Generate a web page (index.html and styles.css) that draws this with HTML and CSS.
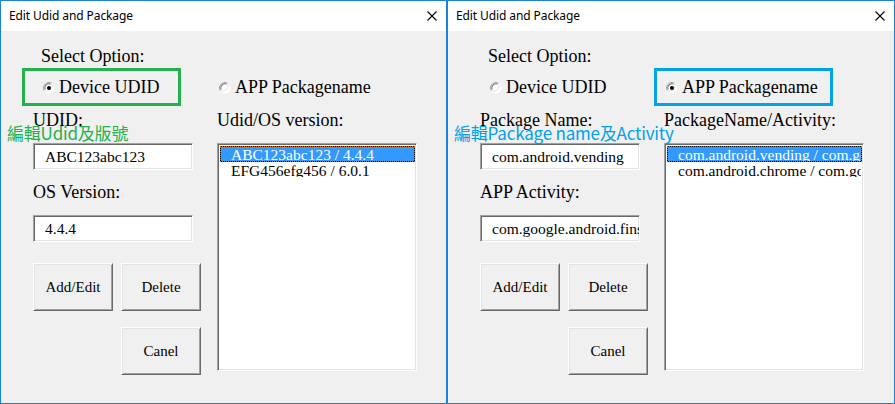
FILE: index.html
```html
<!DOCTYPE html>
<html>
<head>
<meta charset="utf-8">
<title>Edit Udid and Package</title>
<link rel="stylesheet" href="styles.css">
</head>
<body>
<div class="desktop">
  <section class="window win-left">
    <header class="titlebar">
      <span class="title">Edit Udid and Package</span>
      <svg class="close" width="10" height="10" viewBox="0 0 10 10"><path d="M0.5 0.5L9.5 9.5M9.5 0.5L0.5 9.5" stroke="#000" stroke-width="1.1" fill="none"/></svg>
    </header>
    <div class="body">
      <div class="caption">Select Option:</div>
      <div class="radios">
        <label class="radio r1">
          <svg class="radio-dot" width="12" height="12" viewBox="0 0 12 12"><circle cx="6" cy="6" r="5.5" fill="#fff"/><path d="M1.1 8.5A5.5 5.5 0 0 1 8.5 1.1" stroke="#a0a0a0" fill="none"/><path d="M8.5 1.1A5.5 5.5 0 0 1 1.1 8.5" stroke="#e3e3e3" fill="none"/><path d="M2 7.5A4.3 4.3 0 0 1 7.5 2" stroke="#696969" fill="none"/><circle cx="6" cy="6" r="2" fill="#000"/></svg>
          <span>Device UDID</span>
        </label>
        <label class="radio r2">
          <svg class="radio-dot" width="12" height="12" viewBox="0 0 12 12"><circle cx="6" cy="6" r="5.5" fill="#fff"/><path d="M1.1 8.5A5.5 5.5 0 0 1 8.5 1.1" stroke="#a0a0a0" fill="none"/><path d="M8.5 1.1A5.5 5.5 0 0 1 1.1 8.5" stroke="#e3e3e3" fill="none"/><path d="M2 7.5A4.3 4.3 0 0 1 7.5 2" stroke="#696969" fill="none"/></svg>
          <span>APP Packagename</span>
        </label>
      </div>
      <div class="main">
        <div class="col-left">
          <div class="label">UDID:</div>
          <div class="field">ABC123abc123</div>
          <div class="label gap">OS Version:</div>
          <div class="field">4.4.4</div>
          <div class="buttons">
            <button class="btn">Add/Edit</button>
            <button class="btn">Delete</button>
            <button class="btn btn-cancel">Canel</button>
          </div>
        </div>
        <div class="col-right">
          <div class="label">Udid/OS version:</div>
          <div class="list">
            <div class="item selected">ABC123abc123 / 4.4.4</div>
            <div class="item">EFG456efg456 / 6.0.1</div>
          </div>
        </div>
      </div>
    </div>
    <div class="mark mark-left green-box"></div>
    <div class="note green-text">編輯Udid及版號</div>
  </section>

  <section class="window win-right">
    <header class="titlebar">
      <span class="title">Edit Udid and Package</span>
      <svg class="close" width="10" height="10" viewBox="0 0 10 10"><path d="M0.5 0.5L9.5 9.5M9.5 0.5L0.5 9.5" stroke="#000" stroke-width="1.1" fill="none"/></svg>
    </header>
    <div class="body">
      <div class="caption">Select Option:</div>
      <div class="radios">
        <label class="radio r1">
          <svg class="radio-dot" width="12" height="12" viewBox="0 0 12 12"><circle cx="6" cy="6" r="5.5" fill="#fff"/><path d="M1.1 8.5A5.5 5.5 0 0 1 8.5 1.1" stroke="#a0a0a0" fill="none"/><path d="M8.5 1.1A5.5 5.5 0 0 1 1.1 8.5" stroke="#e3e3e3" fill="none"/><path d="M2 7.5A4.3 4.3 0 0 1 7.5 2" stroke="#696969" fill="none"/></svg>
          <span>Device UDID</span>
        </label>
        <label class="radio r2">
          <svg class="radio-dot" width="12" height="12" viewBox="0 0 12 12"><circle cx="6" cy="6" r="5.5" fill="#fff"/><path d="M1.1 8.5A5.5 5.5 0 0 1 8.5 1.1" stroke="#a0a0a0" fill="none"/><path d="M8.5 1.1A5.5 5.5 0 0 1 1.1 8.5" stroke="#e3e3e3" fill="none"/><path d="M2 7.5A4.3 4.3 0 0 1 7.5 2" stroke="#696969" fill="none"/><circle cx="6" cy="6" r="2" fill="#000"/></svg>
          <span>APP Packagename</span>
        </label>
      </div>
      <div class="main">
        <div class="col-left">
          <div class="label">Package Name:</div>
          <div class="field">com.android.vending</div>
          <div class="label gap">APP Activity:</div>
          <div class="field">com.google.android.finsky.activities.MainActivity</div>
          <div class="buttons">
            <button class="btn">Add/Edit</button>
            <button class="btn">Delete</button>
            <button class="btn btn-cancel">Canel</button>
          </div>
        </div>
        <div class="col-right">
          <div class="label">PackageName/Activity:</div>
          <div class="list">
            <div class="item selected">com.android.vending / com.google.android.finsky.activities.MainActivity</div>
            <div class="item">com.android.chrome / com.google.android.apps.chrome.Main</div>
          </div>
        </div>
      </div>
    </div>
    <div class="mark mark-right blue-box"></div>
    <div class="note blue-text">編輯Package name及Activity</div>
  </section>
</div>
</body>
</html>
```

FILE: styles.css
```css
* { box-sizing: border-box; }

html, body {
  margin: 0;
  padding: 0;
  background: #f0f0f0;
}

.desktop {
  display: flex;
  width: 895px;
  height: 404px;
  overflow: hidden;
}

.window {
  position: relative;
  height: 404px;
  border: 1px solid #1883d7;
  background: #f0f0f0;
  display: flex;
  flex-direction: column;
}

.win-left { width: 447px; }
.win-right { width: 448px; }

.titlebar {
  height: 30px;
  flex: none;
  background: #fff;
  display: flex;
  align-items: center;
  justify-content: space-between;
  padding: 0 9px 0 8px;
}

.title {
  font-family: "Noto Sans", "Open Sans", sans-serif;
  font-size: 12px;
  color: #000;
  letter-spacing: -0.1px;
  margin-top: -1px;
}

.close {
  display: block;
  margin-top: -1px;
}

.body {
  padding: 15px 0 0 32px;
  font-family: "Liberation Serif", "Times New Roman", serif;
  color: #000;
}

.caption {
  font-size: 18px;
  line-height: 20px;
  height: 20px;
  margin-left: 8px;
}

.radios {
  margin-top: 11px;
  display: grid;
  grid-template-columns: 168px 200px;
  column-gap: 16px;
  height: 20px;
}

.radio {
  display: flex;
  align-items: center;
  gap: 4px;
  font-size: 18px;
  line-height: 20px;
  white-space: nowrap;
}

.radio .radio-dot { flex: none; margin-top: 1px; }

.r1 { margin-left: 10px; }
.r2 { margin-left: 2px; }

.main {
  margin-top: 13px;
  display: grid;
  grid-template-columns: 168px 200px;
  column-gap: 16px;
}

.col-left, .col-right {
  display: flex;
  flex-direction: column;
}

.label {
  font-size: 18px;
  line-height: 20px;
  height: 20px;
  white-space: nowrap;
}

.label.gap { margin-top: 12px; }

.field {
  margin-top: 13px;
  width: 160px;
  height: 27px;
  background: #fff;
  border: 1px solid;
  border-color: #a0a0a0 #fff #fff #a0a0a0;
  box-shadow: inset 1px 1px #696969, inset -1px -1px #e3e3e3;
  padding: 0 2px 0 11px;
  font-size: 15.5px;
  line-height: 25px;
  white-space: nowrap;
  overflow: hidden;
}

.buttons {
  margin-top: 21px;
  display: grid;
  grid-template-columns: 80px 80px;
  column-gap: 8px;
  row-gap: 16px;
}

.btn {
  height: 48px;
  margin: 0;
  padding: 0;
  background: #f0f0f0;
  border: 1px solid;
  border-color: #fff #696969 #696969 #fff;
  box-shadow: inset 1px 1px #e3e3e3, inset -1px -1px #a0a0a0;
  font-family: "Liberation Serif", "Times New Roman", serif;
  font-size: 15px;
  color: #000;
}

.btn-cancel { grid-column: 2; }

.list {
  margin-top: 13px;
  width: 200px;
  height: 228px;
  background: #fff;
  border: 1px solid;
  border-color: #a0a0a0 #fff #fff #a0a0a0;
  box-shadow: inset 1px 1px #696969, inset -1px -1px #e3e3e3;
  padding: 2px 1px 1px 2px;
  overflow: hidden;
}

.item {
  height: 16px;
  font-size: 15.5px;
  line-height: 15px;
  padding-left: 10px;
  white-space: nowrap;
  overflow: hidden;
  border: 1px solid transparent;
}

.item.selected {
  color: #fff;
  border: 1px dotted #cc6600;
  background: linear-gradient(#3399ff, #3399ff) padding-box, linear-gradient(#000, #000) border-box;
}

.mark {
  position: absolute;
  top: 67px;
  height: 38px;
  border: 3px solid;
}

.mark-left { left: 21px; width: 159px; }
.mark-right { left: 206px; width: 179px; }

.green-box { border-color: #22b14c; }
.blue-box { border-color: #00a2e8; }

.note {
  position: absolute;
  top: 122px;
  left: 6px;
  font-family: "Noto Sans CJK TC", "Noto Sans", sans-serif;
  font-size: 17px;
  font-weight: 400;
  line-height: 20px;
  letter-spacing: -0.2px;
  white-space: nowrap;
}

.green-text { color: #22b14c; }
.blue-text { color: #00a2e8; }
```
